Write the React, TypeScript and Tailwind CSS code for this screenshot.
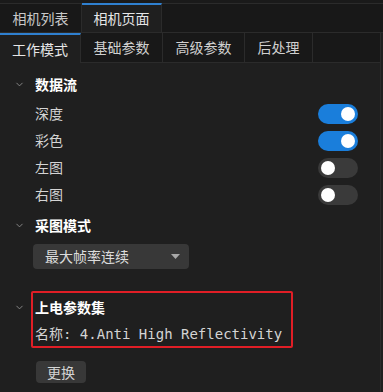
import { ChevronDown } from "lucide-react";

const cjk = "font-['Noto_Sans_CJK_SC','Noto_Sans',sans-serif]";

function Toggle({ on }: { on: boolean }) {
    return (
        <div
            className={
                on
                    ? "w-[40px] h-[20px] rounded-full bg-[#1a7edb] flex items-center justify-end px-[3px]"
                    : "w-[40px] h-[20px] rounded-full bg-[#3a3a3a] flex items-center justify-start px-[3px]"
            }
        >
            <div className="w-[14px] h-[14px] rounded-full bg-white" />
        </div>
    );
}

function SectionHead({ title }: { title: string }) {
    return (
        <div className="flex items-center h-[24px]">
            <div className="w-[35px] flex justify-end pr-[10px]">
                <ChevronDown size={11} strokeWidth={2} className="text-[#8c8c8c]" />
            </div>
            <span className="text-[14px] font-bold text-white">{title}</span>
        </div>
    );
}

const streams = [
    { name: "深度", on: true },
    { name: "彩色", on: true },
    { name: "左图", on: false },
    { name: "右图", on: false },
];

export default function App() {
    return (
        <div className={`w-[383px] h-[392px] bg-[#1f1f1f] overflow-hidden flex flex-col ${cjk}`}>
            <div className="h-[3px] bg-[#1a1a1a]" />
            <div className="flex h-[30px] bg-[#181818] border-t border-[#2b2b2b] border-b">
                <div className="w-[82px] flex items-center justify-center text-[14px] text-[#c8c8c8] border-r border-[#2b2b2b]">
                    相机列表
                </div>
                <div className="w-[80px] flex items-center justify-center text-[14px] text-[#e6e6e6] bg-[#1f1f1f] border-t-2 border-t-[#2f80d0] -mt-px border-r border-[#2b2b2b]">
                    相机页面
                </div>
            </div>
            <div className="flex flex-1 min-h-0">
                <div className="flex-1 flex flex-col relative">
                    <div className="flex h-[30px] bg-[#181818] border-b border-[#2b2b2b]">
                        <div className="w-[81px] flex items-center justify-center text-[14px] text-[#e6e6e6] bg-[#1f1f1f] border-t-2 border-t-[#2f80d0] -mb-px border-r border-[#2b2b2b]">
                            工作模式
                        </div>
                        <div className="w-[82px] flex items-center justify-center text-[14px] text-[#d0d0d0] border-r border-[#2b2b2b]">
                            基础参数
                        </div>
                        <div className="w-[82px] flex items-center justify-center text-[14px] text-[#d0d0d0] border-r border-[#2b2b2b]">
                            高级参数
                        </div>
                        <div className="w-[68px] flex items-center justify-center text-[14px] text-[#d0d0d0] border-r border-[#2b2b2b]">
                            后处理
                        </div>
                    </div>

                    <div className="flex flex-col pt-[9px]">
                        <SectionHead title="数据流" />
                        <div className="flex flex-col pt-[4px]">
                            {streams.map((s) => (
                                <div key={s.name} className="flex items-center justify-between h-[27px] pl-[35px] pr-[22px]">
                                    <span className="text-[14px] text-[#d4d4d4]">{s.name}</span>
                                    <Toggle on={s.on} />
                                </div>
                            ))}
                        </div>

                        <div className="mt-[5px]">
                            <SectionHead title="采图模式" />
                        </div>
                        <div className="pl-[33px] mt-[7px]">
                            <div className="w-[156px] h-[25px] rounded-[4px] bg-[#383838] flex items-center justify-between pl-[12px] pr-[9px]">
                                <span className="text-[14px] text-[#dcdcdc]">最大帧率连续</span>
                                <svg width="9" height="6" viewBox="0 0 9 6">
                                    <path d="M0 0 L9 0 L4.5 5 Z" fill="#a8a8a8" />
                                </svg>
                            </div>
                        </div>

                        <div className="relative mt-[22px]">
                            <div className="pt-[4px]">
                                <SectionHead title="上电参数集" />
                            </div>
                            <div className="pl-[35px] h-[30px] flex items-center">
                                <span className="text-[14px] text-[#d4d4d4] font-['DejaVu_Sans_Mono','Noto_Sans_CJK_SC',monospace]">
                                    名称: 4.Anti High Reflectivity
                                </span>
                            </div>
                            <div className="absolute left-[31px] top-0 w-[262px] h-[57px] border-2 border-[#e01e26] rounded-[2px]" />
                        </div>

                        <div className="pl-[36px] mt-[12px]">
                            <button className="w-[50px] h-[22px] rounded-[4px] bg-[#383838] text-[14px] text-[#d4d4d4] flex items-center justify-center">
                                更换
                            </button>
                        </div>
                    </div>
                </div>
                <div className="w-[3px] border-l border-[#2b2b2b] bg-[#1f1f1f]" />
            </div>
        </div>
    );
}
